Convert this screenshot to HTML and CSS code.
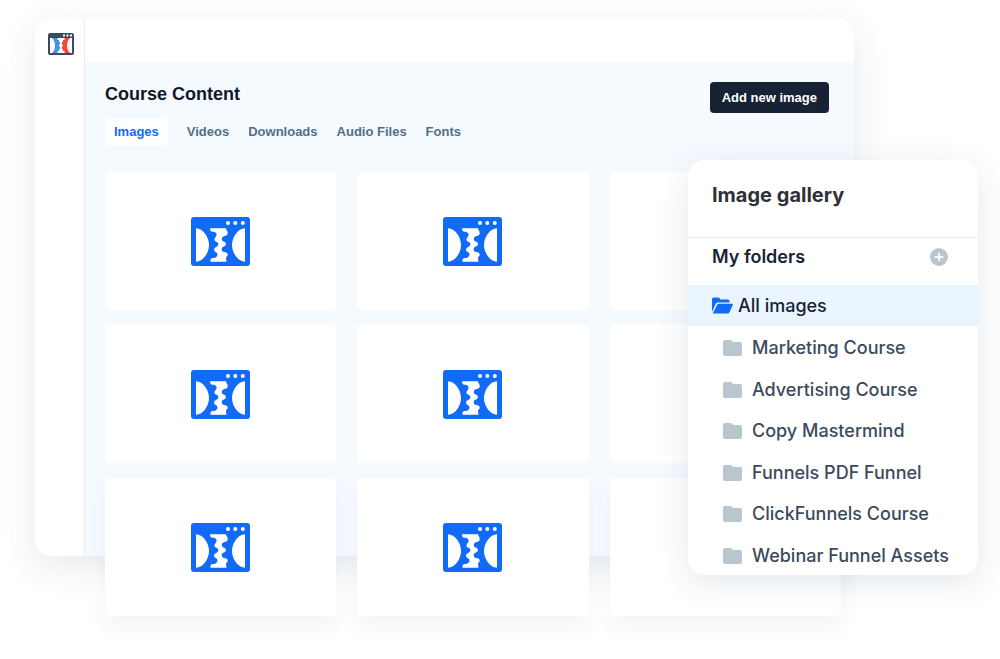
FILE: index.html
```html
<!DOCTYPE html>
<html lang="en">
<head>
<meta charset="utf-8">
<meta name="viewport" content="width=device-width, initial-scale=1">
<title>Course Content</title>
<link rel="stylesheet" href="styles.css">
</head>
<body>
<svg class="sprite" aria-hidden="true">
  <symbol id="funnel" viewBox="0 0 59 49">
    <rect width="59" height="49" rx="3" fill="#116af8"/>
    <g fill="#fff">
      <circle cx="37" cy="6" r="2"/><circle cx="44.300" cy="6" r="2"/><circle cx="51.800" cy="6" r="2"/>
      <path d="M5 11.300C12 11.500 18 20 18 28S12 44.500 5 44.700Z"/>
      <path d="M54 11.300C47 11.500 41 20 41 28s6 16.500 13 16.700Z"/>
      <path d="M19 11.300h16c0 2 1.800 2.500 1.700 4.700c0 2.500-1.500 2.700-3.200 3c-2 .5-2.800 1.800-2.700 3.200c.2 1.800 1.300 2 2.600 2.500c1.300.5 1.600 1.600 1.400 3c-.3 2-3.800 1.500-4.100 4c-.2 2 1 3 2.400 3.300c2 .3 3.600.7 3.600 2.800c0 1.500-1.500 1.700-1.700 3c-.1 1 .5 2 .4 3.900H19.500c-.3-2 .2-3.700 2.200-3.800c2 0 3-.3 4-1.500c1.200-1.400 1-3.300-.2-4c-1.300-.7-2.700-1.200-2.400-3.200c.3-2.200 3.900-2.300 4.200-4.700c.2-2-1-2.300-2.500-3c-1.900-1-1.600-2.700-.5-4c1.500-1.600 1.700-3.200.7-4.400c-.8-1-2-1.300-3.500-1.300c-1.500 0-2.500-1-2.500-3.500Z"/>
    </g>
  </symbol>
  <symbol id="folder" viewBox="0 0 19 16">
    <path d="M2 0h5.500c.7 0 1.200.3 1.600.8L10.300 2H17a2 2 0 0 1 2 2v10a2 2 0 0 1-2 2H2a2 2 0 0 1-2-2V2a2 2 0 0 1 2-2Z" fill="#b8c6ce"/>
  </symbol>
</svg>

<main class="stage">
  <div class="window">
    <aside class="sidebar">
      <svg class="logo" viewBox="0 0 26 22" role="img" aria-label="ClickFunnels">
        <rect width="26" height="22" rx="2" fill="#3c4a5d"/>
        <path d="M2 5h22v15H2Z" fill="#fff"/>
        <g fill="#fff"><rect x="15" y="1.500" width="2" height="2"/><rect x="18.500" y="1.500" width="2" height="2"/><rect x="22" y="1.500" width="2" height="2"/></g>
        <path d="M4 5H9.500v2h1.500v2h1v2.500h-1v2h1V16h-1v2H9.500v2H4C6 18 7 15.500 7 12.500S6 7 4 5Z" fill="#3d97dc"/>
        <path d="M22 5h-5.500v2H15v2h-1.200v2.500h1v2h-1V16H15v2h1.500v2H22C20 18 19 15.500 19 12.500S20 7 22 5Z" fill="#f04b32"/>
      </svg>
    </aside>
    <div class="workspace">
      <header class="topbar"></header>
      <section class="content">
        <div class="heading">
          <h1>Course Content</h1>
          <button class="add" type="button">Add new image</button>
        </div>
        <nav class="tabs">
          <a class="tab active" href="#images">Images</a>
          <a class="tab" href="#videos">Videos</a>
          <a class="tab" href="#downloads">Downloads</a>
          <a class="tab" href="#audio">Audio Files</a>
          <a class="tab" href="#fonts">Fonts</a>
        </nav>
        <div class="cards">
          <div class="card"><svg><use href="#funnel"/></svg></div>
          <div class="card"><svg><use href="#funnel"/></svg></div>
          <div class="card"></div>
          <div class="card"><svg><use href="#funnel"/></svg></div>
          <div class="card"><svg><use href="#funnel"/></svg></div>
          <div class="card"></div>
          <div class="card raised"><svg><use href="#funnel"/></svg></div>
          <div class="card raised"><svg><use href="#funnel"/></svg></div>
          <div class="card raised"></div>
        </div>
      </section>
    </div>
  </div>

  <aside class="gallery">
    <h2>Image gallery</h2>
    <div class="folders-head">
      <h3>My folders</h3>
      <button class="plus" type="button" aria-label="Add folder">
        <svg viewBox="0 0 18 18"><circle cx="9" cy="9" r="9" fill="#b8c6ce"/><path d="M9 5.500v7M5.500 9h7" stroke="#fff" stroke-width="1.800" stroke-linecap="round"/></svg>
      </button>
    </div>
    <a class="all" href="#all">
      <svg viewBox="0 0 21 17"><path d="M0 15V2Q0 .5 1.500.5H6q.8 0 1.300.6l1.200 1.400H16q1.500 0 1.500 1.500v1.500H6q-1.500 0-2.300 1.300Z" fill="#116af8"/><path d="M.7 16.500 5 8q.5-1.200 2-1.200h13q1.300 0 .8 1.200l-3.300 7.300q-.5 1.200-2 1.200Z" fill="#116af8"/></svg>
      All images
    </a>
    <ul class="folders">
      <li><a href="#marketing"><svg><use href="#folder"/></svg>Marketing Course</a></li>
      <li><a href="#advertising"><svg><use href="#folder"/></svg>Advertising Course</a></li>
      <li><a href="#copy"><svg><use href="#folder"/></svg>Copy Mastermind</a></li>
      <li><a href="#pdf"><svg><use href="#folder"/></svg>Funnels PDF Funnel</a></li>
      <li><a href="#clickfunnels"><svg><use href="#folder"/></svg>ClickFunnels Course</a></li>
      <li><a href="#webinar"><svg><use href="#folder"/></svg>Webinar Funnel Assets</a></li>
    </ul>
  </aside>
</main>
</body>
</html>
```
FILE: styles.css
```css
* { box-sizing: border-box; }
body {
  margin: 0;
  background: #fff;
  font-family: "Liberation Sans", Arial, sans-serif;
}
h1, h2, h3, ul { margin: 0; padding: 0; }
a { color: inherit; text-decoration: none; }
button { border: 0; padding: 0; font: inherit; cursor: pointer; }
svg { display: block; flex: none; }
.sprite { position: absolute; width: 0; height: 0; }

.stage {
  position: relative;
  min-height: 100vh;
  padding: 19px 146px 103px 35px;
}
.window {
  display: flex;
  border-radius: 16px;
  background: #fff;
  box-shadow: 0 10px 36px rgba(50, 75, 95, 0.12);
}
.sidebar {
  width: 50px;
  padding: 14px 0 0 13px;
  border-right: 1px solid #e8edf1;
}
.logo { width: 26px; height: 22px; }
.workspace { flex: 1; }
.topbar { height: 43px; }
.content {
  display: flow-root;
  padding: 20px 13px 0 20px;
  background: #f5faff;
  border-bottom-right-radius: 16px;
}
.heading {
  display: flex;
  justify-content: space-between;
  align-items: flex-start;
  padding-right: 12px;
}
h1 {
  color: #101828;
  font-size: 18px;
  line-height: 24px;
}
.add {
  height: 31px;
  padding: 0 12px;
  border-radius: 4px;
  background: #172334;
  color: #fff;
  font-size: 13px;
  font-weight: 700;
}
.tabs {
  display: flex;
  gap: 19px;
  margin-top: 5px;
}
.tab {
  color: #516f89;
  font-size: 13px;
  font-weight: 700;
  line-height: 28px;
}
.tab.active {
  padding: 0 9px;
  border-radius: 5px;
  background: #fff;
  color: #116af8;
}
.cards {
  display: grid;
  grid-template-columns: repeat(3, 1fr);
  gap: 15px 21px;
  margin: 26px 0 -60px;
}
.card {
  display: grid;
  place-items: center;
  height: 138px;
  border-radius: 5px;
  background: #fff;
}
.card svg { width: 59px; height: 49px; }
.card.raised { box-shadow: 0 12px 20px rgba(40, 90, 150, 0.06); }

.gallery {
  position: absolute;
  top: 160px;
  right: 22px;
  width: 290px;
  overflow: hidden;
  border-radius: 16px;
  background: #fff;
  box-shadow: 0 8px 32px rgba(50, 75, 110, 0.13);
  font-family: Inter, sans-serif;
}
h2 {
  padding: 20px 24px 27px;
  border-bottom: 1px solid #e8edf1;
  color: #2e3137;
  font-size: 20px;
  font-weight: 700;
  line-height: 30px;
}
.folders-head {
  display: flex;
  align-items: center;
  justify-content: space-between;
  padding: 7px 30px 16px 24px;
}
h3 {
  color: #172334;
  font-size: 18px;
  font-weight: 600;
  line-height: 24px;
}
.plus { background: none; }
.plus svg { width: 18px; height: 18px; }
.all {
  display: flex;
  align-items: center;
  gap: 5px;
  padding: 0 24px;
  background: #eaf5ff;
  color: #172334;
  font-size: 18px;
  font-weight: 500;
  line-height: 41px;
}
.all svg { width: 21px; height: 17px; }
.folders {
  display: grid;
  align-content: space-between;
  min-height: 249px;
  padding-top: 3px;
  list-style: none;
}
.folders a {
  display: flex;
  align-items: center;
  gap: 10px;
  padding-left: 35px;
  color: #3c4a5d;
  font-size: 18px;
  font-weight: 500;
  line-height: 38px;
  white-space: nowrap;
}
.folders svg { width: 19px; height: 16px; }
```
